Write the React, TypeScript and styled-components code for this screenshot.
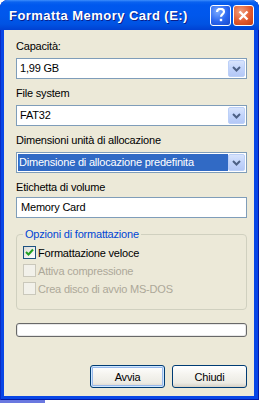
import React from "react";
import styled, { createGlobalStyle } from "styled-components";

const Global = createGlobalStyle`
  html, body { margin: 0; padding: 0; background: #ffffff; }
  body { font-family: "Liberation Sans", Arial, sans-serif; }
  * { box-sizing: border-box; }
`;

const Page = styled.div`
  width: 261px;
  height: 403px;
  display: flex;
  flex-direction: column;
  background: #ffffff;
  overflow: hidden;
`;

const Window = styled.div`
  width: 259px;
  height: 400px;
  display: flex;
  flex-direction: column;
  border-radius: 8px 8px 0 0;
  background: #0846e6;
  box-shadow: inset 1px 0 0 #0a2cc4, inset -1px 0 0 #0019a8, inset 0 -1px 0 #0019a8;
  overflow: hidden;
`;

const TitleBar = styled.div`
  height: 30px;
  flex: none;
  display: flex;
  align-items: center;
  padding: 0 5px 0 9px;
  background: linear-gradient(
    180deg,
    #3d8dfb 0px,
    #0a62f0 2px,
    #0058ee 5px,
    #0057ec 15px,
    #0053e3 24px,
    #0047d8 28px,
    #0040d2 30px
  );
`;

const Title = styled.div`
  flex: 1;
  color: #ffffff;
  font-family: "Liberation Sans", Arial, sans-serif;
  font-weight: bold;
  font-size: 13px;
  letter-spacing: 0.45px;
  text-shadow: 1px 1px 0 #0a1e8a;
  white-space: nowrap;
  padding-top: 1px;
`;

const CaptionButton = styled.div<{ $close?: boolean }>`
  width: 21px;
  height: 21px;
  margin-left: 2px;
  border: 1px solid #ffffff;
  border-radius: 3px;
  display: flex;
  align-items: center;
  justify-content: center;
  background: ${(p) =>
    p.$close
      ? "radial-gradient(circle at 35% 30%, #f0a080 0%, #e25a2e 55%, #c23d12 100%)"
      : "radial-gradient(circle at 35% 30%, #7aaaff 0%, #2a66f0 55%, #1848c8 100%)"};
  color: #ffffff;
`;

const Client = styled.div`
  flex: 1;
  margin: 0 5px 4px 4px;
  background: #ece9d8;
  display: flex;
  flex-direction: column;
  padding: 10px 7px 0 12px;
  font-size: 11px;
  letter-spacing: -0.2px;
  color: #000000;
`;

const Label = styled.div<{ $gap?: number }>`
  height: 13px;
  line-height: 13px;
  margin-top: ${(p) => p.$gap ?? 0}px;
  white-space: nowrap;
`;

const Combo = styled.div`
  width: 231px;
  height: 21px;
  margin-top: 5px;
  border: 1px solid #7f9db9;
  background: #ffffff;
  display: flex;
  align-items: center;
  padding: 1px;
`;

const ComboText = styled.div<{ $selected?: boolean }>`
  flex: 1;
  height: 17px;
  line-height: 17px;
  padding-left: ${(p) => (p.$selected ? 1 : 2)}px;
  background: ${(p) => (p.$selected ? "#316ac5" : "transparent")};
  color: ${(p) => (p.$selected ? "#ffffff" : "#000000")};
  white-space: nowrap;
  overflow: hidden;
`;

const DropButton = styled.div`
  width: 17px;
  height: 17px;
  flex: none;
  border: 1px solid #bcd0f8;
  border-radius: 2px;
  background: linear-gradient(180deg, #d8e4fc 0%, #c2d4fb 50%, #b4c8f6 100%);
  display: flex;
  align-items: center;
  justify-content: center;
`;

const TextBox = styled.div`
  width: 231px;
  height: 21px;
  margin-top: 3px;
  border: 1px solid #7f9db9;
  background: #ffffff;
  line-height: 19px;
  padding-left: 4px;
  white-space: nowrap;
`;

const Group = styled.fieldset`
  width: 231px;
  height: 82px;
  margin: 10px 0 0 0;
  padding: 5px 6px 0 6px;
  border: 1px solid #d0d0bf;
  border-radius: 4px;
  display: flex;
  flex-direction: column;
  gap: 5px;
`;

const Legend = styled.legend`
  color: #0046d5;
  padding: 0 2px;
  font-size: 11px;
  line-height: 13px;
`;

const CheckRow = styled.div<{ $disabled?: boolean }>`
  display: flex;
  align-items: center;
  height: 13px;
  gap: 2px;
  color: ${(p) => (p.$disabled ? "#aca899" : "#000000")};
  white-space: nowrap;
`;

const Box = styled.div<{ $disabled?: boolean }>`
  width: 13px;
  height: 13px;
  flex: none;
  border: 1px solid ${(p) => (p.$disabled ? "#cac8bb" : "#1c5180")};
  background: ${(p) =>
    p.$disabled ? "#f2f1ea" : "linear-gradient(135deg, #dcdcd7 0%, #ffffff 100%)"};
  display: flex;
  align-items: center;
  justify-content: center;
`;

const Progress = styled.div`
  width: 231px;
  height: 14px;
  flex: none;
  margin-top: 13px;
  border: 1px solid #686868;
  border-radius: 3px;
  background: #ffffff;
  box-shadow: inset 0 0 0 1px #e8e8e8;
`;

const Buttons = styled.div`
  display: flex;
  justify-content: flex-end;
  gap: 7px;
  margin-top: 28px;
  width: 231px;
`;

const Button = styled.div<{ $default?: boolean }>`
  width: 75px;
  height: 23px;
  border: 1px solid #003c74;
  border-radius: 3px;
  background: linear-gradient(180deg, #ffffff 0%, #f5f4ef 40%, #ecebe4 80%, #d6d0c5 100%);
  box-shadow: ${(p) =>
    p.$default ? "inset 0 0 0 1px #cee7ff, inset 0 0 0 2px #98b8ea" : "none"};
  display: flex;
  align-items: center;
  justify-content: center;
  font-size: 11px;
`;

const BottomStrip = styled.div`
  width: 45px;
  height: 3px;
  background: #6a78e0;
`;

const Chevron = () => (
  <svg width="9" height="6" viewBox="0 0 9 6">
    <path d="M1 1 L4.5 4.5 L8 1" fill="none" stroke="#4d6185" strokeWidth="2" />
  </svg>
);

const Check = () => (
  <svg width="9" height="9" viewBox="0 0 9 9">
    <path d="M1 4 L3.5 6.5 L8 1.5" fill="none" stroke="#21a121" strokeWidth="2" />
  </svg>
);

const ComboBox = ({ value, selected }: { value: string; selected?: boolean }) => (
  <Combo>
    <ComboText $selected={selected}>{value}</ComboText>
    <DropButton>
      <Chevron />
    </DropButton>
  </Combo>
);

export default function App() {
  return (
    <Page>
      <Global />
      <Window>
        <TitleBar>
          <Title>Formatta Memory Card (E:)</Title>
          <CaptionButton>
            <svg width="11" height="14" viewBox="0 0 11 14">
              <path
                d="M2 4 C2 1.5 4 0.8 5.5 0.8 C7.5 0.8 9 2 9 3.8 C9 6 6 6.2 6 8.8"
                fill="none"
                stroke="#ffffff"
                strokeWidth="2.2"
              />
              <rect x="4.8" y="10.8" width="2.4" height="2.4" fill="#ffffff" />
            </svg>
          </CaptionButton>
          <CaptionButton $close>
            <svg width="11" height="11" viewBox="0 0 11 11">
              <path d="M1.5 1.5 L9.5 9.5 M9.5 1.5 L1.5 9.5" stroke="#ffffff" strokeWidth="2.4" />
            </svg>
          </CaptionButton>
        </TitleBar>
        <Client>
          <Label>Capacità:</Label>
          <ComboBox value="1,99 GB" />
          <Label $gap={8}>File system</Label>
          <ComboBox value="FAT32" />
          <Label $gap={8}>Dimensioni unità di allocazione</Label>
          <ComboBox value="Dimensione di allocazione predefinita" selected />
          <Label $gap={8}>Etichetta di volume</Label>
          <TextBox>Memory Card</TextBox>
          <Group>
            <Legend>Opzioni di formattazione</Legend>
            <CheckRow>
              <Box>
                <Check />
              </Box>
              Formattazione veloce
            </CheckRow>
            <CheckRow $disabled>
              <Box $disabled />
              Attiva compressione
            </CheckRow>
            <CheckRow $disabled>
              <Box $disabled />
              Crea disco di avvio MS-DOS
            </CheckRow>
          </Group>
          <Progress />
          <Buttons>
            <Button $default>Avvia</Button>
            <Button>Chiudi</Button>
          </Buttons>
        </Client>
      </Window>
      <BottomStrip />
    </Page>
  );
}
